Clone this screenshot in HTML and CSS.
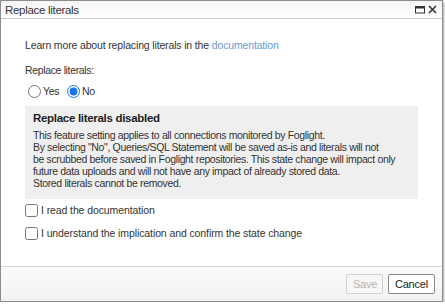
FILE: index.html
```html
<!DOCTYPE html>
<html>
<head>
<meta charset="utf-8">
<link rel="stylesheet" href="styles.css">
</head>
<body>
<div class="dialog">
  <div class="titlebar">
    <span class="title">Replace literals</span>
    <span class="tools">
      <svg width="10" height="9" viewBox="0 0 10 9"><rect x="0.5" y="1.5" width="9" height="6.5" fill="none" stroke="#333" stroke-width="1"/><rect x="0.5" y="1.5" width="9" height="2" fill="#333"/></svg>
      <svg width="9" height="9" viewBox="0 0 9 9"><path d="M1 1L8 8M8 1L1 8" stroke="#333" stroke-width="1.6"/></svg>
    </span>
  </div>
  <div class="content">
    <p class="learn">Learn more about replacing literals in the <a class="link">documentation</a></p>
    <p class="label">Replace literals:</p>
    <div class="radios">
      <label class="radio"><input type="radio" name="r"> Yes</label>
      <label class="radio"><input type="radio" name="r" checked> No</label>
    </div>
    <div class="note">
      <div class="note-title">Replace literals disabled</div>
      <div class="note-text">This feature setting applies to all connections monitored by Foglight.<br>By selecting "No", Queries/SQL Statement will be saved as-is and literals will not<br>be scrubbed before saved in Foglight repositories. This state change will impact only<br>future data uploads and will not have any impact of already stored data.<br>Stored literals cannot be removed.</div>
    </div>
    <label class="check first"><input type="checkbox">I read the documentation</label>
    <label class="check"><input type="checkbox">I understand the implication and confirm the state change</label>
  </div>
  <div class="footer">
    <button class="btn btn-disabled" disabled>Save</button>
    <button class="btn">Cancel</button>
  </div>
</div>
</body>
</html>
```
FILE: styles.css
```css
html, body {
  margin: 0;
  padding: 0;
  background: #ffffff;
}
body {
  font-family: "Liberation Sans", Arial, sans-serif;
  font-size: 10.5px;
  letter-spacing: -0.35px;
  color: #333;
}
.dialog {
  width: 441px;
  height: 300px;
  border: 1px solid #8c8c8c;
  background: #fff;
  box-shadow: 1px 2px 2px rgba(0,0,0,0.35);
  display: flex;
  flex-direction: column;
  box-sizing: content-box;
}
.titlebar {
  height: 17px;
  border-bottom: 1px solid #c8c8c8;
  background: linear-gradient(#f4f4f4, #ffffff);
  display: flex;
  align-items: center;
  justify-content: space-between;
  padding: 0 5px 0 4px;
}
.title {
  font-size: 11.5px;
  letter-spacing: -0.3px;
  color: #333;
}
.tools {
  display: flex;
  gap: 3px;
  align-items: center;
}
.content {
  flex: 1;
  padding: 15px 24px 0 24px;
}
p { margin: 0; }
.learn {
  line-height: 14px;
  margin-top: 4px;
  letter-spacing: -0.15px;
}
.link { color: #6a9bd8; }
.label {
  margin-top: 11px;
  line-height: 14px;
}
.radios {
  display: flex;
  gap: 8px;
  margin-top: 6px;
  margin-left: 3px;
  height: 16px;
  align-items: center;
}
.radio {
  display: flex;
  align-items: center;
}
.radio input {
  margin: 0 2px 0 0;
  width: 13px;
  height: 13px;
  accent-color: #1a73e8;
}
.note {
  margin-top: 7px;
  background: #efefef;
  padding: 5px 8px 10px 8px;
  white-space: nowrap;
}
.note-title {
  font-weight: bold;
  font-size: 11.5px;
  letter-spacing: -0.3px;
  line-height: 14px;
  color: #222;
}
.note-text {
  line-height: 12px;
  margin-top: 4px;
}
.check {
  display: flex;
  align-items: center;
  height: 14px;
  margin-top: 9px;
  letter-spacing: -0.1px;
}
.check.first { margin-top: 4px; }
.check input {
  margin: 0 3px 0 0;
  width: 13px;
  height: 13px;
}
.footer {
  height: 34px;
  border-top: 1px solid #d6d6d6;
  background: linear-gradient(#fbfbfb, #f2f2f2);
  display: flex;
  justify-content: flex-end;
  align-items: center;
  gap: 5px;
  padding: 0 7px 0 0;
}
.btn {
  font-family: inherit;
  font-size: 11px;
  letter-spacing: -0.2px;
  height: 20px;
  padding: 0 6px;
  border: 1px solid #8a8a8a;
  border-radius: 2px;
  background: #fff;
  color: #222;
}
.btn-disabled {
  color: #b5b5b5;
  border-color: #d0d0d0;
  background: #f7f7f7;
  width: 37px;
}
```
